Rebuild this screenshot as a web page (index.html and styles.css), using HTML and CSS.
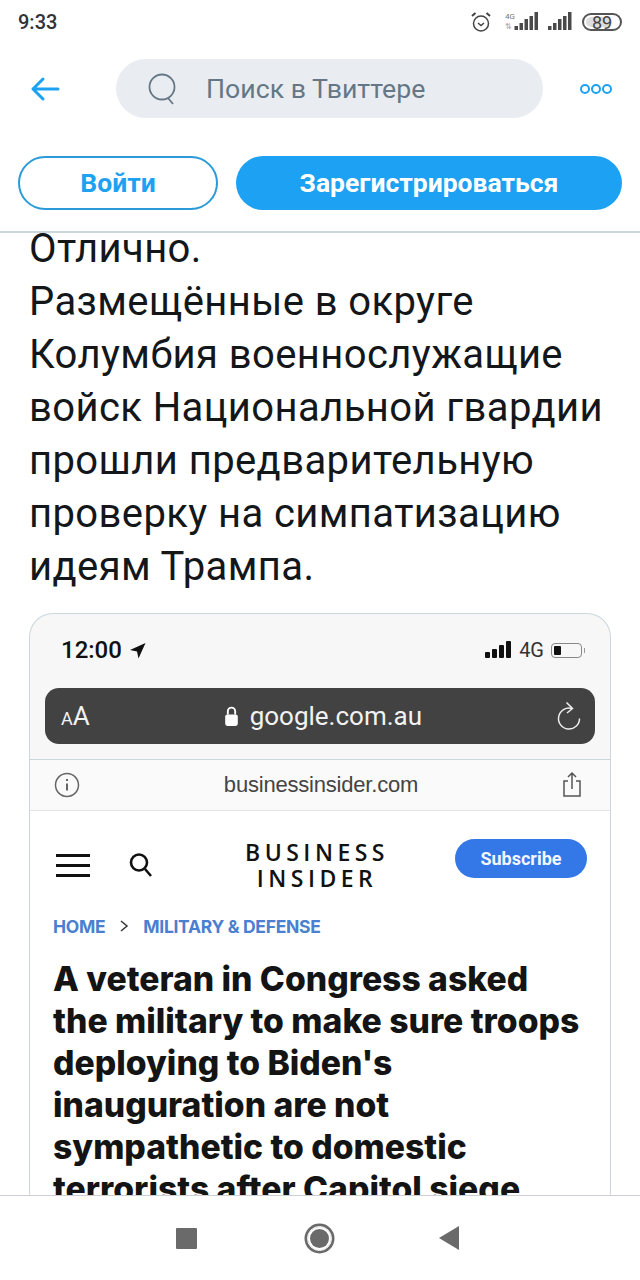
FILE: index.html
```html
<!DOCTYPE html>
<html lang="ru">
    <head>
        <meta charset="UTF-8" />
        <title>Твиттер</title>
        <link rel="stylesheet" href="styles.css">
    </head>
    <body>
        <div class="status-bar">
            <span class="status-time">9:33</span>
            <div class="status-icons">
                <svg class="alarm" width="22" height="22" viewBox="0 0 22 22" fill="none" stroke="#444" stroke-width="1.5">
                    <circle cx="11" cy="12.5" r="7.5" />
                    <path d="M8 12l3 2.500 3-2.500" />
                    <path d="M2 5l3.500-3M20 5l-3.500-3" stroke-width="2" />
                </svg>
                <div class="net">
                    <span class="net-label">4G</span>
                    <span class="net-arrows">⇅</span>
                </div>
                <svg class="signal" width="26" height="20" viewBox="0 0 25 20" fill="#4a4a4a">
                    <rect x="0" y="15" width="3.500" height="4" />
                    <rect x="5" y="12" width="3.500" height="7" />
                    <rect x="10" y="8" width="3.500" height="11" />
                    <rect x="15" y="5" width="3.500" height="14" />
                    <rect x="20" y="1" width="3.500" height="18" />
                </svg>
                <svg class="signal signal-two" width="25" height="20" viewBox="0 0 25 20" fill="#4a4a4a">
                    <rect x="0" y="15" width="3.500" height="4" />
                    <rect x="5" y="12" width="3.500" height="7" />
                    <rect x="10" y="8" width="3.500" height="11" />
                    <rect x="15" y="5" width="3.500" height="14" />
                    <rect x="20" y="1" width="3.500" height="18" />
                </svg>
                <div class="battery"><span class="battery-fill"></span><span class="battery-num">89</span></div>
            </div>
        </div>

        <header class="top-bar">
            <svg class="back" width="30" height="26" viewBox="0 0 30 26" fill="none" stroke="#1da1f2" stroke-width="3" stroke-linecap="round" stroke-linejoin="round">
                <path d="M28 13H3M13 3L3 13l10 10" />
            </svg>
            <div class="search">
                <svg width="30" height="32" viewBox="0 0 30 32" fill="none" stroke="#657786" stroke-width="1.800">
                    <circle cx="14" cy="14" r="12.500" />
                    <path d="M20 25l5 6" />
                </svg>
                <span class="search-text">Поиск в Твиттере</span>
            </div>
            <div class="more">
                <span class="dot"></span><span class="dot"></span><span class="dot"></span>
            </div>
        </header>

        <div class="auth-row">
            <a class="btn btn-outline">Войти</a>
            <a class="btn btn-fill">Зарегистрироваться</a>
        </div>

        <main class="content">
            <p class="tweet">Отлично.<br>Размещённые в округе<br>Колумбия военнослужащие<br>войск Национальной гвардии<br>прошли предварительную<br>проверку на симпатизацию<br>идеям Трампа.</p>

            <div class="shot">
                <div class="ios-status">
                    <div class="ios-time">
                        12:00
                        <svg width="17" height="17" viewBox="0 0 17 17" fill="#111"><path d="M16.500 1L1 8l7 1.500L9.500 16.500z" /></svg>
                    </div>
                    <div class="ios-right">
                        <svg width="27" height="18" viewBox="0 0 27 18" fill="#111">
                            <rect x="0" y="11" width="5" height="6" rx="1" />
                            <rect x="7" y="8" width="5" height="9" rx="1" />
                            <rect x="14" y="4" width="5" height="13" rx="1" />
                            <rect x="21" y="0" width="5" height="17" rx="1" />
                        </svg>
                        <span class="ios-4g">4G</span>
                        <div class="ios-battery"><span class="ios-battery-level"></span></div>
                        <span class="ios-battery-tip"></span>
                    </div>
                </div>

                <div class="url-bar">
                    <span class="aa"><small>A</small>A</span>
                    <div class="url">
                        <svg width="15" height="21" viewBox="0 0 14 20" fill="#fff">
                            <rect x="1" y="8" width="12" height="11" rx="2" />
                            <path d="M3.500 8V5a3.500 3.500 0 0 1 7 0v3" fill="none" stroke="#fff" stroke-width="1.800" />
                        </svg>
                        google.com.au
                    </div>
                    <svg width="26" height="32" viewBox="0 0 26 32" fill="none" stroke="#eee" stroke-width="1.500">
                        <path d="M16 8.500A10.500 10.500 0 1 0 23.500 18.500" />
                        <path d="M10.500 2.500L16.500 8.500 11 13" />
                    </svg>
                </div>

                <div class="site-bar">
                    <svg width="26" height="26" viewBox="0 0 26 26" fill="none" stroke="#666" stroke-width="1.500">
                        <circle cx="13" cy="13" r="11.500" />
                        <path d="M13 11.500v7" stroke-width="2" />
                        <path d="M13 7v2" stroke-width="2" />
                    </svg>
                    <span class="site-name">businessinsider.com</span>
                    <svg width="20" height="28" viewBox="0 0 20 28" fill="none" stroke="#555" stroke-width="1.500">
                        <path d="M6 10H2v15h16V10h-4" />
                        <path d="M10 18V2M6 6l4-4 4 4" />
                    </svg>
                </div>

                <div class="bi-head">
                    <div class="hamburger"><span></span><span></span><span></span></div>
                    <svg class="bi-search" width="26" height="28" viewBox="0 0 26 28" fill="none" stroke="#111" stroke-width="2.600">
                        <circle cx="11" cy="11.500" r="8" />
                        <path d="M17 18l6 7" />
                    </svg>
                    <div class="bi-logo">BUSINESS<br>INSIDER</div>
                    <a class="subscribe">Subscribe</a>
                </div>

                <div class="article">
                    <div class="crumbs"><span>HOME</span><svg width="10" height="12" viewBox="0 0 10 12" fill="none" stroke="#333" stroke-width="1.500"><path d="M2 1l6 5-6 5" /></svg><span>MILITARY &amp; DEFENSE</span></div>
                    <h1 class="headline">A veteran in Congress asked<br>the military to make sure troops<br>deploying to Biden's<br>inauguration are not<br>sympathetic to domestic<br>terrorists after Capitol siege</h1>
                </div>
            </div>
        </main>

        <nav class="nav-bar">
            <span class="nav-square"></span>
            <span class="nav-circle"></span>
            <span class="nav-back"></span>
        </nav>
    </body>
</html>
```

FILE: styles.css
```css
body {
    margin: 0;
    width: 640px;
    height: 1280px;
    display: flex;
    flex-direction: column;
    overflow: hidden;
    background: #fff;
    font-family: Roboto, sans-serif;
    color: #14171a;
}
svg {
    display: block;
    flex-shrink: 0;
}

/* phone status bar */
.status-bar {
    height: 44px;
    flex-shrink: 0;
    display: flex;
    align-items: center;
    justify-content: space-between;
    padding: 0 18px;
}
.status-time {
    font-size: 20px;
    font-weight: 500;
    color: #333;
}
.status-icons {
    display: flex;
    align-items: center;
}
.net {
    width: 9px;
    margin-left: 13px;
    display: flex;
    flex-direction: column;
    color: #777;
    line-height: 10px;
}
.net-label {
    font-size: 8px;
}
.net-arrows {
    font-size: 8px;
    color: #aaa;
}
.signal {
    margin-top: -2px;
}
.signal-two {
    margin-left: 8px;
}
.battery {
    position: relative;
    width: 36px;
    height: 14px;
    margin-left: 9px;
    border: 2px solid #555;
    border-radius: 9px;
    display: flex;
    align-items: center;
    justify-content: center;
}
.battery-fill {
    position: absolute;
    left: 2px;
    top: 2px;
    bottom: 2px;
    width: 26px;
    border-radius: 6px;
    background: #ddd;
}
.battery-num {
    position: relative;
    font-size: 18px;
    color: #444;
}

/* twitter header */
.top-bar {
    height: 59px;
    margin-top: 15px;
    flex-shrink: 0;
    display: flex;
    align-items: center;
    padding: 0 28px 0 30px;
}
.search {
    width: 427px;
    height: 59px;
    margin-left: 56px;
    border-radius: 30px;
    background: #e9edf1;
    display: flex;
    align-items: center;
    padding-left: 32px;
    box-sizing: border-box;
}
.search-text {
    margin-left: 28px;
    font-size: 26.700px;
    color: #657786;
}
.more {
    margin-left: auto;
    display: flex;
    gap: 1px;
}
.dot {
    width: 6px;
    height: 6px;
    border: 2.500px solid #1da1f2;
    border-radius: 50%;
}
.auth-row {
    height: 54px;
    margin-top: 38px;
    flex-shrink: 0;
    display: flex;
    gap: 18px;
    padding: 0 18px;
}
.btn {
    display: flex;
    align-items: center;
    justify-content: center;
    box-sizing: border-box;
    border-radius: 27px;
    padding-bottom: 2px;
    font-size: 26.500px;
    font-weight: 700;
}
.btn-outline {
    width: 200px;
    border: 2px solid #2a9bd8;
    color: #1da1f2;
}
.btn-fill {
    flex: 1;
    background: #1da1f2;
    color: #fff;
}

/* tweet */
.content {
    margin-top: 21px;
    flex: 1;
    min-height: 0;
    overflow: hidden;
    border-top: 2px solid #ccd6dd;
    padding: 0 29px;
}
.tweet {
    margin: -11px 0 0;
    font-size: 40px;
    line-height: 53px;
    letter-spacing: 0.4px;
    white-space: nowrap;
    color: #14171a;
}
.shot {
    margin-top: 20px;
    width: 582px;
    box-sizing: border-box;
    border: 1.500px solid #ccd6dd;
    border-bottom: 0;
    border-radius: 24px 24px 0 0;
    background: #f7f7f7;
    overflow: hidden;
}
.ios-status {
    height: 74px;
    display: flex;
    align-items: center;
    justify-content: space-between;
    padding: 0 25px 2px 31px;
    box-sizing: border-box;
}
.ios-time {
    display: flex;
    align-items: center;
    gap: 7px;
    font-size: 24px;
    font-weight: 500;
    color: #111;
}
.ios-right {
    display: flex;
    align-items: center;
}
.ios-4g {
    margin-left: 7px;
    font-size: 20px;
    color: #333;
}
.ios-battery {
    width: 31px;
    height: 15px;
    margin-left: 7px;
    box-sizing: border-box;
    border: 1px solid #888;
    border-radius: 4px;
    padding: 2px;
}
.ios-battery-level {
    display: block;
    width: 7px;
    height: 100%;
    background: #111;
    border-radius: 1px;
}
.ios-battery-tip {
    width: 1px;
    height: 5px;
    margin-left: 2px;
    background: #999;
}
.url-bar {
    height: 56px;
    margin: 0 15px;
    border-radius: 14px;
    background: #424242;
    display: flex;
    align-items: center;
    justify-content: space-between;
    padding: 0 13px 0 16px;
    color: #f2f2f2;
}
.aa {
    font-size: 26px;
}
.aa small {
    font-size: 18px;
}
.url {
    display: flex;
    align-items: center;
    gap: 11px;
    font-size: 26px;
}
.site-bar {
    height: 50px;
    margin-top: 15px;
    border-top: 1px solid #ccd6dd;
    border-bottom: 1px solid #e3e3e3;
    display: flex;
    align-items: center;
    justify-content: space-between;
    padding: 0 28px 0 24px;
    background: #fafafa;
}
.site-name {
    font-family: "Liberation Sans", sans-serif;
    font-size: 22px;
    letter-spacing: -0.2px;
    color: #444;
}
.bi-head {
    height: 109px;
    box-sizing: border-box;
    background: #fff;
    border-bottom: 1px solid #e1e8ed;
    display: flex;
    align-items: center;
    padding: 0 23px 0 26px;
}
.hamburger {
    width: 34px;
    display: flex;
    flex-direction: column;
    gap: 7px;
}
.hamburger span {
    height: 3px;
    background: #111;
}
.bi-search {
    margin-left: 38px;
}
.bi-logo {
    width: 150px;
    margin-left: 88px;
    text-align: center;
    white-space: nowrap;
    font-family: "Open Sans", sans-serif;
    font-size: 23px;
    font-weight: 600;
    line-height: 26px;
    letter-spacing: 4.500px;
    color: #111;
}
.subscribe {
    width: 132px;
    height: 39px;
    margin-left: auto;
    margin-top: -13px;
    border-radius: 20px;
    background: #3478e8;
    color: #f2f6fd;
    font-size: 18px;
    font-weight: 700;
    display: flex;
    align-items: center;
    justify-content: center;
}
.article {
    background: #fff;
    padding: 0 23px;
    height: 300px;
}
.crumbs {
    display: flex;
    align-items: center;
    gap: 14px;
    height: 16px;
    margin-top: -2px;
    font-family: "Inter", sans-serif;
    font-size: 17.500px;
    font-weight: 700;
    letter-spacing: -0.3px;
    color: #4a80cf;
}
.headline {
    margin: 24px 0 0;
    white-space: nowrap;
    font-family: "Inter", sans-serif;
    font-size: 33.700px;
    line-height: 42px;
    font-weight: 800;
    color: #141414;
}

/* android nav */
.nav-bar {
    height: 84px;
    flex-shrink: 0;
    border-top: 1px solid #ccd0d4;
    background: #fff;
    display: flex;
    align-items: center;
    padding: 0 0 0 176px;
}
.nav-square {
    width: 21px;
    height: 21px;
    border-radius: 1px;
    background: #6a6a6a;
}
.nav-circle {
    width: 19px;
    height: 19px;
    margin-left: 110px;
    background: #6a6a6a;
    border: 1.500px solid #fff;
    box-shadow: 0 0 0 2.500px #6a6a6a;
    border-radius: 50%;
    padding: 2px;
    background-clip: content-box;
}
.nav-back {
    margin-left: 107px;
    width: 0;
    height: 0;
    border-top: 12px solid transparent;
    border-bottom: 12px solid transparent;
    border-right: 20px solid #6a6a6a;
}
```
